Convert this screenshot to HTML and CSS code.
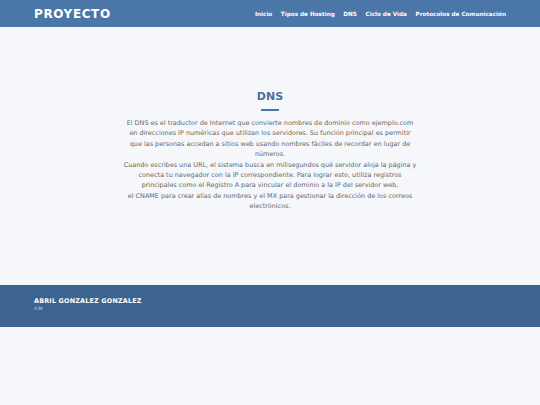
FILE: index.html
```html
<!DOCTYPE html>
<html lang="es">
<head>
<meta charset="utf-8">
<title>Proyecto</title>
<link rel="stylesheet" href="styles.css">
</head>
<body>
<header class="topbar">
  <div class="brand">PROYECTO</div>
  <nav class="nav">
    <a href="#">Inicio</a>
    <a href="#">Tipos de Hosting</a>
    <a href="#">DNS</a>
    <a href="#">Ciclo de Vida</a>
    <a href="#">Protocolos de Comunicación</a>
  </nav>
</header>
<main class="content">
  <section class="card">
    <h1 class="title">DNS</h1>
    <div class="rule"></div>
    <p class="text">El DNS es el traductor de Internet que convierte nombres de dominio como ejemplo.com en direcciones IP numéricas que utilizan los servidores. Su función principal es permitir que las personas accedan a sitios web usando nombres fáciles de recordar en lugar de números.<br>Cuando escribes una URL, el sistema busca en milisegundos qué servidor aloja la página y conecta tu navegador con la IP correspondiente. Para lograr esto, utiliza registros principales como el Registro A para vincular el dominio a la IP del servidor web,<br>el CNAME para crear alias de nombres y el MX para gestionar la dirección de los correos electrónicos.</p>
  </section>
</main>
<footer class="footer">
  <div class="author">ABRIL GONZALEZ GONZALEZ</div>
  <div class="group">ICM</div>
</footer>
</body>
</html>
```
FILE: styles.css
```css
html, body {
  margin: 0;
  padding: 0;
  background: #f5f7fa;
  font-family: "DejaVu Sans", Verdana, sans-serif;
}
.topbar {
  height: 27px;
  background: #4a76a8;
  display: flex;
  align-items: center;
  justify-content: space-between;
  padding: 0 34px;
  box-sizing: border-box;
}
.brand {
  color: #fff;
  font-weight: bold;
  font-size: 12px;
  letter-spacing: 0.6px;
}
.nav {
  display: flex;
  gap: 8.6px;
}
.nav a {
  color: #fff;
  text-decoration: none;
  font-weight: bold;
  font-size: 5.7px;
}
.content {
  height: 258px;
  display: flex;
  justify-content: center;
  padding-top: 63px;
  box-sizing: border-box;
}
.card {
  width: 295px;
  text-align: center;
}
.title {
  margin: 0;
  font-size: 11px;
  color: #4a6fa0;
  font-weight: bold;
}
.rule {
  width: 18px;
  height: 2px;
  background: #4a76a8;
  margin: 6px auto 7px;
}
.text {
  margin: 0;
  font-size: 6.45px;
  line-height: 10.4px;
  color: #6a6a6a;
}
.footer {
  height: 42px;
  background: #3d6490;
  padding: 12px 34px 0;
  box-sizing: border-box;
  color: #fff;
}
.author {
  font-weight: bold;
  font-size: 6.4px;
  letter-spacing: 0.2px;
}
.group {
  font-size: 4.5px;
  color: #c8d4e2;
  margin-top: 1px;
}
```
